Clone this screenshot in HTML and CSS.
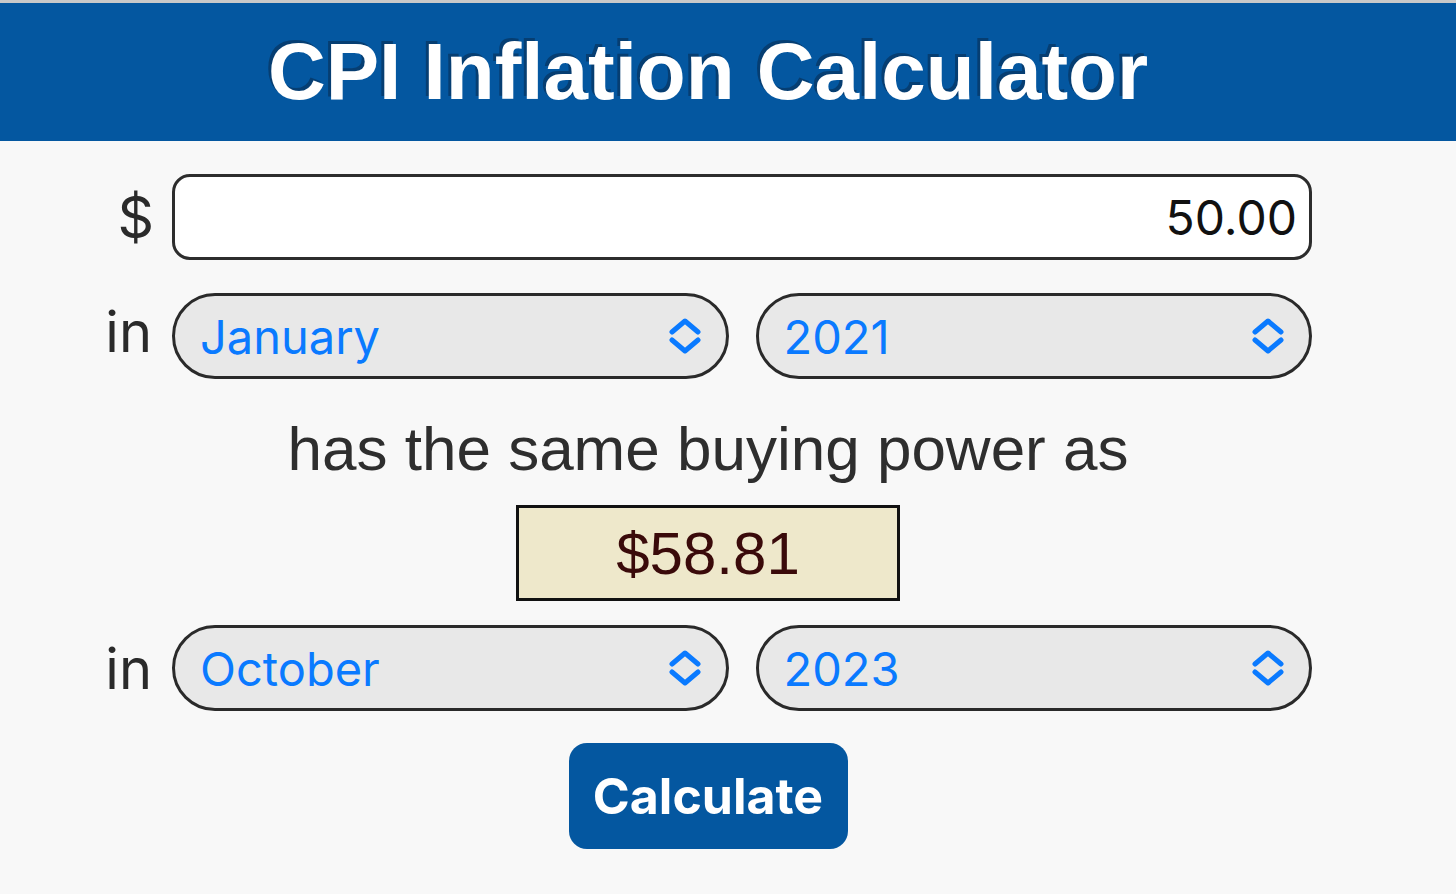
FILE: index.html
```html
<!DOCTYPE html>
<html lang="en">
<head>
<meta charset="utf-8">
<title>CPI Inflation Calculator</title>
<link rel="stylesheet" href="styles.css">
</head>
<body>
<header class="topbar">
  <h1 class="title">CPI Inflation Calculator</h1>
</header>
<main class="calc">
  <div class="row">
    <span class="label label-dollar">$</span>
    <input class="amount" type="text" value="50.00">
  </div>
  <div class="row">
    <span class="label">in</span>
    <div class="selects">
      <div class="select"><span class="select-text">January</span><svg class="chev" viewBox="0 0 34 36" width="34" height="36"><path d="M4 14 L17 3 L30 14 M4 22 L17 33 L30 22" fill="none" stroke="#0a7aff" stroke-width="5" stroke-linecap="round" stroke-linejoin="round"/></svg></div>
      <div class="select"><span class="select-text">2021</span><svg class="chev" viewBox="0 0 34 36" width="34" height="36"><path d="M4 14 L17 3 L30 14 M4 22 L17 33 L30 22" fill="none" stroke="#0a7aff" stroke-width="5" stroke-linecap="round" stroke-linejoin="round"/></svg></div>
    </div>
  </div>
  <p class="phrase">has the same buying power as</p>
  <div class="result">$58.81</div>
  <div class="row">
    <span class="label">in</span>
    <div class="selects">
      <div class="select"><span class="select-text">October</span><svg class="chev" viewBox="0 0 34 36" width="34" height="36"><path d="M4 14 L17 3 L30 14 M4 22 L17 33 L30 22" fill="none" stroke="#0a7aff" stroke-width="5" stroke-linecap="round" stroke-linejoin="round"/></svg></div>
      <div class="select"><span class="select-text">2023</span><svg class="chev" viewBox="0 0 34 36" width="34" height="36"><path d="M4 14 L17 3 L30 14 M4 22 L17 33 L30 22" fill="none" stroke="#0a7aff" stroke-width="5" stroke-linecap="round" stroke-linejoin="round"/></svg></div>
    </div>
  </div>
  <button class="calc-btn" type="button">Calculate</button>
</main>
</body>
</html>
```
FILE: styles.css
```css
html, body {
  margin: 0;
  padding: 0;
}
body {
  background: #f8f8f8;
  font-family: "Liberation Sans", Arial, sans-serif;
  color: #333;
  border-top: 3px solid #c9c9c9;
  width: 1456px;
  height: 891px;
  overflow: hidden;
}
.topbar {
  height: 138px;
  background: #0457a0;
  display: flex;
  align-items: center;
  justify-content: center;
  padding-right: 40px;
}
.title {
  margin: 0;
  color: #fff;
  font-family: "Liberation Sans", Arial, sans-serif;
  font-weight: bold;
  font-size: 80px;
  line-height: 1;
  text-shadow: -3px -3px 0 #063e72;
}
.calc {
  width: 1416px;
  display: flex;
  flex-direction: column;
  align-items: center;
  padding-top: 33px;
}
.row {
  width: 1216px;
  margin-left: -8px;
  display: flex;
  align-items: center;
  gap: 16px;
}
.label {
  box-sizing: border-box;
  width: 60px;
  padding-right: 4px;
  text-align: right;
  font-family: Inter, "Liberation Sans", sans-serif;
  font-size: 56px;
  color: #2a2a2a;
  line-height: 1;
}
.label-dollar {
  font-size: 57px;
  width: 58px;
  padding-right: 0;
  margin-right: 2px;
}
.amount {
  flex: 1;
  box-sizing: border-box;
  height: 86px;
  margin: 0;
  border: 3px solid #2d2d2d;
  border-radius: 18px;
  background: #fff;
  text-align: right;
  font-family: Inter, "Liberation Sans", sans-serif;
  font-size: 48px;
  color: #111;
  padding: 0 12px 0 14px;
  outline: none;
}
.selects {
  flex: 1;
  display: flex;
  gap: 27px;
  margin-top: 33px;
}
.select {
  flex: 1;
  box-sizing: border-box;
  height: 86px;
  border: 3px solid #2a2a2a;
  border-radius: 43px;
  background: #e8e8e8;
  display: flex;
  align-items: center;
  justify-content: space-between;
  padding: 0 24px 0 25px;
}
.select-text {
  font-family: Inter, "Liberation Sans", sans-serif;
  font-size: 47px;
  color: #0a7aff;
  line-height: 1;
}
.chev {
  display: block;
}
.row:nth-child(2) .label,
.row:nth-child(5) .label {
  margin-top: 25px;
}
.phrase {
  margin: 36px 0 0 0;
  font-family: "Liberation Sans", Arial, sans-serif;
  font-size: 62px;
  line-height: 68px;
  color: #2e2e2e;
}
.result {
  margin-top: 22px;
  box-sizing: border-box;
  width: 384px;
  height: 96px;
  background: #eee8cb;
  border: 3px solid #111;
  display: flex;
  align-items: center;
  justify-content: center;
  font-family: "Liberation Sans", Arial, sans-serif;
  font-size: 60px;
  color: #3a0a0a;
}
.row:nth-child(5) .selects {
  margin-top: 24px;
}
.calc-btn {
  margin-top: 32px;
  width: 279px;
  height: 106px;
  border: none;
  border-radius: 18px;
  background: #0457a0;
  color: #fff;
  font-family: Inter, "Liberation Sans", sans-serif;
  font-weight: bold;
  font-size: 50px;
  padding: 0;
}
```
